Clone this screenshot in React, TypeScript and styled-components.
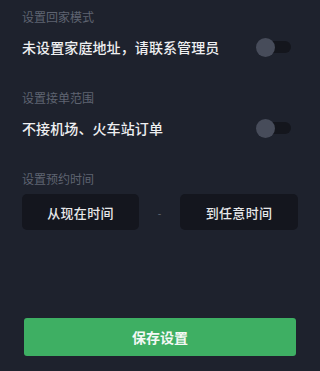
import React from "react";
import styled, { createGlobalStyle } from "styled-components";

const Global = createGlobalStyle`
  html, body { margin: 0; padding: 0; background: #1e222d; }
  body { font-family: "Noto Sans CJK SC", "Noto Sans", sans-serif; }
`;

const Page = styled.div`
  min-height: 100vh;
  box-sizing: border-box;
  display: flex;
  flex-direction: column;
  padding: 7px 0 15px;
  background: #1e222d;
`;

const Section = styled.section`
  padding: 0 22px;
  margin-bottom: 26px;
`;

const Label = styled.div`
  font-size: 12px;
  line-height: 20px;
  height: 20px;
  color: #5f6471;
  margin-bottom: 5px;
`;

const Row = styled.div`
  height: 30px;
  display: flex;
  align-items: center;
  justify-content: space-between;
`;

const RowText = styled.span`
  font-size: 14px;
  font-weight: 500;
  color: #eeeff1;
  letter-spacing: 0.1px;
`;

const Toggle = styled.div`
  position: relative;
  width: 35px;
  height: 19px;
  margin-right: 7px;
  display: flex;
  align-items: center;
`;

const Track = styled.div`
  margin-left: 4px;
  width: 31px;
  height: 12px;
  border-radius: 6px;
  background: #14161d;
`;

const Knob = styled.div`
  position: absolute;
  left: 0;
  top: 0;
  width: 19px;
  height: 19px;
  border-radius: 50%;
  background: #474c5a;
`;

const TimeRow = styled.div`
  display: grid;
  grid-template-columns: 117px 1fr 118px;
  align-items: center;
  margin-top: 5px;
`;

const TimeButton = styled.div`
  height: 36px;
  border-radius: 5px;
  background: #14161e;
  color: #e7e8ea;
  font-size: 13px;
  font-weight: 500;
  display: flex;
  align-items: center;
  justify-content: center;
  letter-spacing: 0.3px;
`;

const Dash = styled.div`
  text-align: center;
  color: #6a6f7b;
  font-size: 10px;
  line-height: 10px;
  padding-top: 2px;
`;

const Footer = styled.div`
  margin-top: auto;
  padding: 0 24px;
`;

const SaveButton = styled.button`
  width: 100%;
  height: 38px;
  border: none;
  border-radius: 3px;
  background: #3eaf63;
  color: #f4f8f5;
  font-family: inherit;
  font-size: 14px;
  font-weight: 700;
  display: flex;
  align-items: center;
  justify-content: center;
`;

const Switch = () => (
  <Toggle>
    <Track />
    <Knob />
  </Toggle>
);

export default function App() {
  return (
    <>
      <Global />
      <Page>
        <Section>
          <Label>设置回家模式</Label>
          <Row>
            <RowText>未设置家庭地址，请联系管理员</RowText>
            <Switch />
          </Row>
        </Section>
        <Section>
          <Label>设置接单范围</Label>
          <Row>
            <RowText>不接机场、火车站订单</RowText>
            <Switch />
          </Row>
        </Section>
        <Section>
          <Label>设置预约时间</Label>
          <TimeRow>
            <TimeButton>从现在时间</TimeButton>
            <Dash>-</Dash>
            <TimeButton>到任意时间</TimeButton>
          </TimeRow>
        </Section>
        <Footer>
          <SaveButton>保存设置</SaveButton>
        </Footer>
      </Page>
    </>
  );
}
